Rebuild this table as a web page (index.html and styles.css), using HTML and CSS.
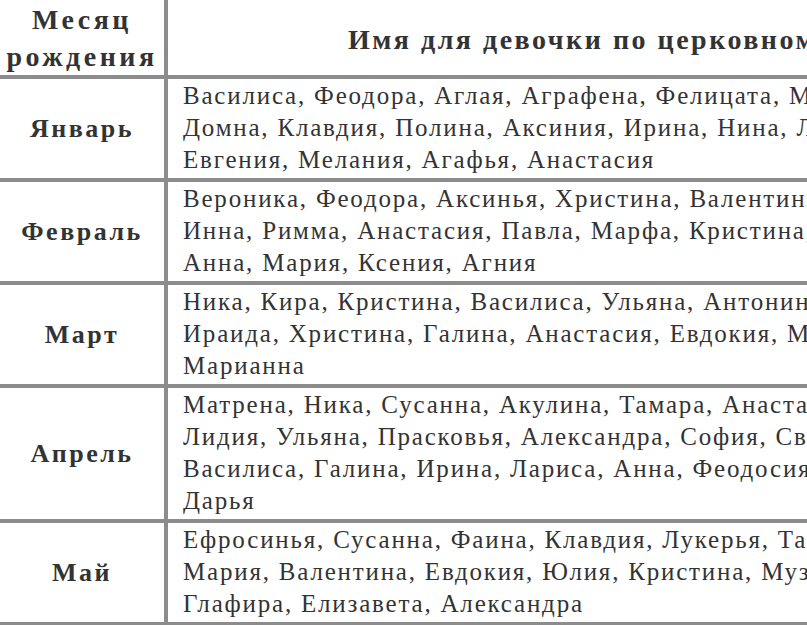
FILE: index.html
```html
<!DOCTYPE html>
<html lang="ru">
<head>
<meta charset="utf-8">
<link rel="stylesheet" href="styles.css">
</head>
<body>
<table class="names">
  <tr class="head">
    <th class="month">Месяц<br>рождения</th>
    <th class="title">Имя для девочки по церковному календарю</th>
  </tr>
  <tr>
    <td class="month">Январь</td>
    <td class="list">Василиса, Феодора, Аглая, Аграфена, Фелицата, Мария, Татьяна<br>Домна, Клавдия, Полина, Аксиния, Ирина, Нина, Лидия, Марина<br>Евгения, Мелания, Агафья, Анастасия</td>
  </tr>
  <tr>
    <td class="month">Февраль</td>
    <td class="list">Вероника, Феодора, Аксинья, Христина, Валентина, Светлана<br>Инна, Римма, Анастасия, Павла, Марфа, Кристина, Ирина, Зоя<br>Анна, Мария, Ксения, Агния</td>
  </tr>
  <tr>
    <td class="month">Март</td>
    <td class="list">Ника, Кира, Кристина, Василиса, Ульяна, Антонина, Марина<br>Ираида, Христина, Галина, Анастасия, Евдокия, Мария, Анна<br>Марианна</td>
  </tr>
  <tr>
    <td class="month">Апрель</td>
    <td class="list">Матрена, Ника, Сусанна, Акулина, Тамара, Анастасия, Ирина<br>Лидия, Ульяна, Прасковья, Александра, София, Светлана, Алла<br>Василиса, Галина, Ирина, Лариса, Анна, Феодосия, Мария<br>Дарья</td>
  </tr>
  <tr>
    <td class="month">Май</td>
    <td class="list">Ефросинья, Сусанна, Фаина, Клавдия, Лукерья, Таисия, Зоя<br>Мария, Валентина, Евдокия, Юлия, Кристина, Муза, Ирина<br>Глафира, Елизавета, Александра</td>
  </tr>
</table>
</body>
</html>
```

FILE: styles.css
```css
html, body {
  margin: 0;
  padding: 0;
  background: #fff;
  overflow: hidden;
  width: 807px;
  height: 625px;
}
.names {
  border-collapse: collapse;
  font-family: "Liberation Serif", "Times New Roman", serif;
  color: #333;
  width: 1300px;
  table-layout: fixed;
  margin-top: -2px;
}
.names td, .names th {
  border: 4px solid #8c8c8c;
  padding: 0;
  vertical-align: middle;
}
.names .month {
  width: 164px;
  text-align: center;
  font-weight: bold;
  font-size: 26px;
  letter-spacing: 2.5px;
  border-left: none;
}
.head th {
  height: 71px;
  border-top: none;
}
.head .month {
  font-size: 28px;
  line-height: 37px;
  letter-spacing: 3.5px;
  vertical-align: top;
  padding-top: 3px;
}
.head .title {
  font-size: 28px;
  letter-spacing: 2.5px;
  text-align: left;
  padding-left: 180px;
  padding-top: 6px;
}
.list {
  font-size: 25px;
  line-height: 32px;
  letter-spacing: 1.8px;
  white-space: nowrap;
  padding: 1px 0 2px 15px !important;
  text-align: left;
}
```
